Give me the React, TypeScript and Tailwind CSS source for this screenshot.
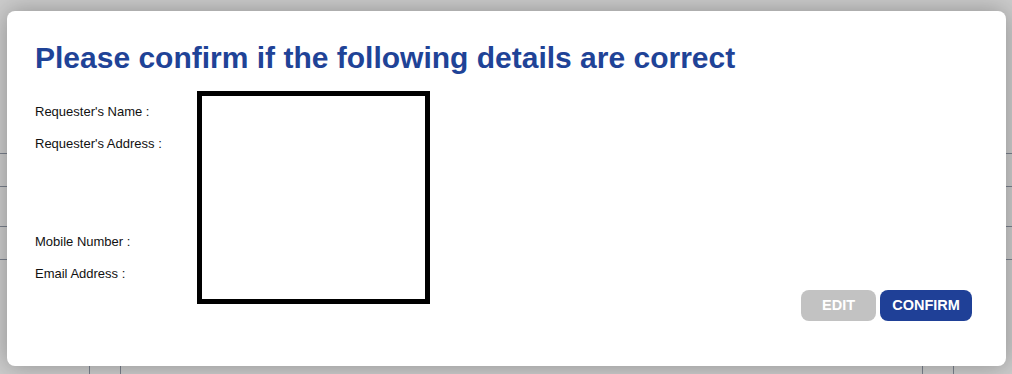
import React from 'react';

const rows = [
  { label: "Requester's Name :", tall: false },
  { label: "Requester's Address :", tall: true },
  { label: 'Mobile Number :', tall: false },
  { label: 'Email Address :', tall: false },
];

const App: React.FC = () => {
  return (
    <div className="relative w-full h-[374px] overflow-hidden bg-white font-['Liberation_Sans',Arial,sans-serif]">
      {/* page behind the dialog */}
      <div className="flex flex-col text-[11px] text-gray-500">
        <div className="h-[154px] border-b border-gray-400" />
        <div className="h-[33px] border-b border-gray-400" />
        <div className="h-[40px] border-b border-gray-400" />
        <div className="h-[33px] border-b border-gray-400" />
        <div className="h-[95px]" />
        <div className="flex h-[40px]">
          <div className="w-[90px] border-r border-gray-400" />
          <div className="w-[31px] border-r border-gray-400" />
          <div className="flex-1 border-r border-gray-400" />
          <div className="w-[31px] border-r border-gray-400" />
          <div className="w-[58px]" />
        </div>
      </div>

      {/* backdrop */}
      <div className="absolute inset-0 bg-black/20" />

      {/* dialog */}
      <div className="absolute left-[7px] top-[11px] w-[999px] h-[355px] bg-white rounded-lg shadow-[0_0_24px_rgba(0,0,0,0.3)] pl-[28px] pr-[34px] pt-[30px] flex flex-col">
        <h2 className="text-[30px] leading-[34px] font-bold text-[#1f4397]">
          Please confirm if the following details are correct
        </h2>

        <div className="flex justify-between mt-[16px]">
          <div className="flex mb-[17px]">
            <div className="w-[162px] pt-[5px] flex flex-col text-[13px] text-[#111]">
              {rows.map(r => (
                <div key={r.label} className={r.tall ? 'h-[98px] pt-[8px] leading-[16px]' : 'h-[32px] flex items-center'}>
                  {r.label}
                </div>
              ))}
            </div>
            <div className="w-[233px] h-[213px] border-[5px] border-black bg-white" />
          </div>

          <div className="flex items-end gap-1">
            <button className="w-[75px] h-[31px] rounded-lg bg-[#c2c2c2] text-white text-[14.5px] font-bold">
              EDIT
            </button>
            <button className="w-[92px] h-[31px] rounded-lg bg-[#1f4097] text-white text-[14.5px] font-bold">
              CONFIRM
            </button>
          </div>
        </div>
      </div>
    </div>
  );
};

export default App;
